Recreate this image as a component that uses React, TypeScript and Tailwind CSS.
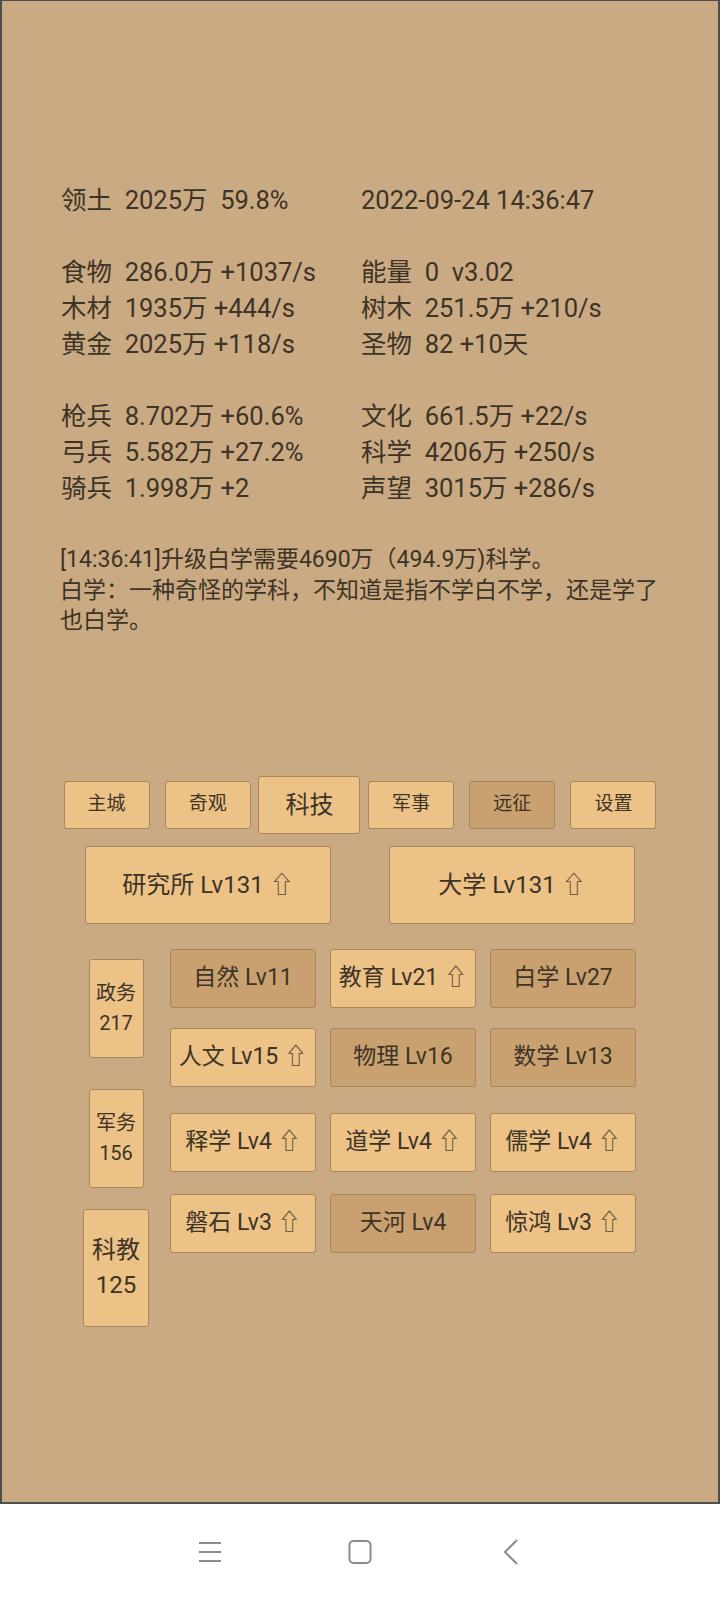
import React from "react";

const light = "bg-[#ecc287]";
const dark = "bg-[#c9a170]";

function Arrow() {
  return <span className="text-[#5a4a38]">⇧</span>;
}

type Cell = { name: string; lv: string; up: boolean };

const rows: Cell[][] = [
  [
    { name: "自然", lv: "Lv11", up: false },
    { name: "教育", lv: "Lv21", up: true },
    { name: "白学", lv: "Lv27", up: false },
  ],
  [
    { name: "人文", lv: "Lv15", up: true },
    { name: "物理", lv: "Lv16", up: false },
    { name: "数学", lv: "Lv13", up: false },
  ],
  [
    { name: "释学", lv: "Lv4", up: true },
    { name: "道学", lv: "Lv4", up: true },
    { name: "儒学", lv: "Lv4", up: true },
  ],
  [
    { name: "磐石", lv: "Lv3", up: true },
    { name: "天河", lv: "Lv4", up: false },
    { name: "惊鸿", lv: "Lv3", up: true },
  ],
];

const rowMargins = ["mt-0", "mt-[20px]", "mt-[26px]", "mt-[22px]"];

const stats: [string, string][] = [
  ["领土  2025万  59.8%", "2022-09-24 14:36:47"],
  ["", ""],
  ["食物  286.0万 +1037/s", "能量  0  v3.02"],
  ["木材  1935万 +444/s", "树木  251.5万 +210/s"],
  ["黄金  2025万 +118/s", "圣物  82 +10天"],
  ["", ""],
  ["枪兵  8.702万 +60.6%", "文化  661.5万 +22/s"],
  ["弓兵  5.582万 +27.2%", "科学  4206万 +250/s"],
  ["骑兵  1.998万 +2", "声望  3015万 +286/s"],
];

const tabs = [
  { t: "主城", sel: false, dark: false },
  { t: "奇观", sel: false, dark: false },
  { t: "科技", sel: true, dark: false },
  { t: "军事", sel: false, dark: false },
  { t: "远征", sel: false, dark: true },
  { t: "设置", sel: false, dark: false },
];

export default function App() {
  return (
    <div className="w-[720px] h-[1600px] bg-white flex flex-col font-[Roboto,'Noto_Sans_CJK_SC',sans-serif] text-[#3d3326]">
      <div className="h-[1504px] shrink-0 bg-[#caaa82] border-x-2 border-t border-b-2 border-[#4d4d4d] flex flex-col">
        {/* stats */}
        <div className="mt-[181px] ml-[59px] grid grid-cols-[300px_1fr] text-[25.5px] leading-[36px] whitespace-pre">
          {stats.map(([a, b], i) => (
            <React.Fragment key={i}>
              <div className="h-[36px]">{a}</div>
              <div className="h-[36px]">{b}</div>
            </React.Fragment>
          ))}
        </div>

        {/* message */}
        <div className="mt-[39px] ml-[58px] w-[600px] text-[23px] leading-[30.5px]">
          <div>[14:36:41]升级白学需要4690万（494.9万)科学。</div>
          <div>白学：一种奇怪的学科，不知道是指不学白不学，还是学了也白学。</div>
        </div>

        {/* tabs */}
        <div className="mt-[139px] ml-[54px] w-[608px] flex items-center h-[58px]">
          {tabs.map((tab) => (
            <div key={tab.t} className="flex-1 flex justify-center">
              <div
                className={
                  tab.sel
                    ? `w-[102px] h-[58px] ${light} border-[1.5px] border-[#a8865a] rounded-[3px] flex items-center justify-center text-[24px]`
                    : `w-[86px] h-[48px] ${tab.dark ? dark : light} border-[1.5px] border-[#a8865a] rounded-[3px] flex items-center justify-center text-[19px]`
                }
              >
                {tab.t}
              </div>
            </div>
          ))}
        </div>

        {/* buildings */}
        <div className="mt-[12px] ml-[54px] w-[608px] grid grid-cols-2">
          <div className="flex justify-center">
            <div className={`w-[246px] h-[78px] ${light} border-[1.5px] border-[#a8865a] rounded-[3px] flex items-center justify-center text-[24px] gap-[6px]`}>
              <span>研究所 Lv131</span>
              <Arrow />
            </div>
          </div>
          <div className="flex justify-center">
            <div className={`w-[246px] h-[78px] ${light} border-[1.5px] border-[#a8865a] rounded-[3px] flex items-center justify-center text-[24px] gap-[6px]`}>
              <span>大学 Lv131</span>
              <Arrow />
            </div>
          </div>
        </div>

        {/* lower */}
        <div className="mt-[25px] ml-[60px] flex">
          <div className="w-[108px] flex flex-col items-center">
            <div className={`mt-[10px] w-[55px] h-[99px] ${light} border-[1.5px] border-[#a8865a] rounded-[3px] flex flex-col items-center justify-center text-[20px] leading-[30px]`}>
              <span>政务</span>
              <span>217</span>
            </div>
            <div className={`mt-[31px] w-[55px] h-[99px] ${light} border-[1.5px] border-[#a8865a] rounded-[3px] flex flex-col items-center justify-center text-[20px] leading-[30px]`}>
              <span>军务</span>
              <span>156</span>
            </div>
            <div className={`mt-[21px] w-[66px] h-[118px] ${light} border-[1.5px] border-[#a8865a] rounded-[3px] flex flex-col items-center justify-center text-[24px] leading-[35px]`}>
              <span>科教</span>
              <span>125</span>
            </div>
          </div>
          <div className="w-[466px] flex flex-col">
            {rows.map((row, ri) => (
              <div key={ri} className={`${rowMargins[ri]} grid grid-cols-3 gap-x-[14px]`}>
                {row.map((c) => (
                  <div
                    key={c.name}
                    className={`h-[59px] ${c.up ? light : dark} border-[1.5px] border-[#a8865a] rounded-[3px] flex items-center justify-center gap-[6px] text-[23px]`}
                  >
                    <span>
                      {c.name} {c.lv}
                    </span>
                    {c.up && <Arrow />}
                  </div>
                ))}
              </div>
            ))}
          </div>
        </div>
      </div>

      {/* nav bar */}
      <div className="flex-1 flex items-center justify-center gap-[126px] pb-[1px]">
        <svg width="24" height="24" viewBox="0 0 24 24" fill="none" stroke="#8c8c8c" strokeWidth="2">
          <line x1="1" y1="3" x2="23" y2="3" />
          <line x1="1" y1="12" x2="23" y2="12" />
          <line x1="1" y1="21" x2="23" y2="21" />
        </svg>
        <svg width="24" height="24" viewBox="0 0 24 24" fill="none" stroke="#8c8c8c" strokeWidth="2">
          <rect x="1.5" y="1" width="21" height="22" rx="4" />
        </svg>
        <svg width="24" height="26" viewBox="0 0 24 26" fill="none" stroke="#8c8c8c" strokeWidth="2">
          <polyline points="19,1 7,13 19,25" />
        </svg>
      </div>
    </div>
  );
}
